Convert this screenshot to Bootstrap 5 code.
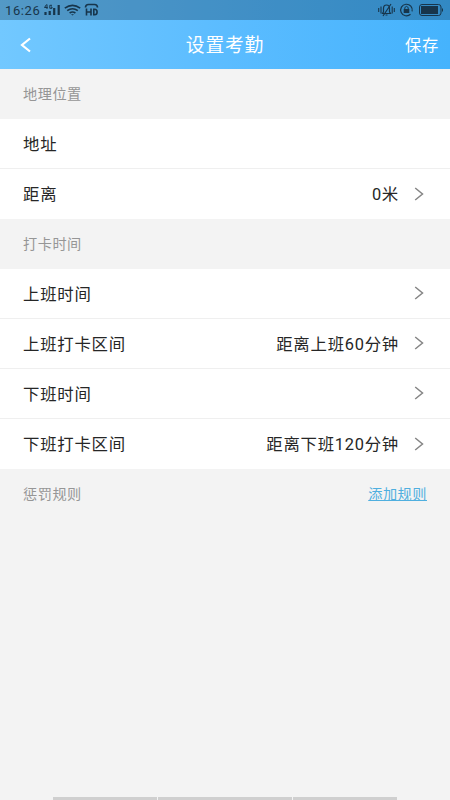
<!DOCTYPE html>
<html lang="zh-CN">
<head>
<meta charset="utf-8">
<meta name="viewport" content="width=device-width, initial-scale=1">
<title>设置考勤</title>
<link href="https://cdn.jsdelivr.net/npm/bootstrap@5.3.0/dist/css/bootstrap.min.css" rel="stylesheet">
<style>
body{background:#f3f3f3;font-family:Roboto,"Noto Sans CJK SC",sans-serif;height:800px;overflow:hidden;color:#222}
.top-area{background:linear-gradient(90deg,#72c8ff,#5bbcff 50%,#45b3fd)}
.status-bar{height:20px;background:rgba(0,25,45,.27);color:#17354b;padding:1px 7px 0 5px}
.status-bar svg{margin-top:-1px}
.clock{font-size:13px;letter-spacing:.6px;line-height:20px}
.title-bar{height:49px;padding:4px 11px 0 20px;color:#fff}
.title-bar h1{font-size:18.8px;letter-spacing:.8px;font-weight:400}
.save-btn{font-size:16.3px;letter-spacing:.7px;color:#fff}
.side-start{width:61px}
.side-end{width:70px}
.back-icon{margin-top:-4px}
.section-head{height:50px;padding:2px 23px 0;font-size:14.2px;letter-spacing:.5px;color:#969696}
.item{height:50px;padding:3px 26px 0 23px!important;font-size:16.4px;letter-spacing:.75px;color:#262626;border-color:#efefef}
.item svg{margin-left:15px;margin-top:-4px}
.add-rule{color:#4fafdf;text-underline-offset:1px}
.nav-strip{height:3px;width:345px;margin-left:53px;gap:1px}
.nav-strip div{background:#cfcfcf}
.w-a{width:104px}.w-b{width:134px}
svg{display:block;flex:none}
</style>
<script src="https://cdn.jsdelivr.net/npm/bootstrap@5.3.0/dist/js/bootstrap.bundle.min.js"></script>
</head>
<body class="d-flex flex-column">
<header class="top-area">
  <div class="status-bar d-flex align-items-center justify-content-between">
    <div class="d-flex align-items-center">
      <span class="clock">16:26</span>
      <svg width="60" height="20" viewBox="40 0 60 20" fill="none" stroke="#17354b">
        <path d="M46.5 4.500 44.500 7.500h3.200M47 4.500V9M52 5.300h-2.200v3H52V7h-1" stroke-width="1"/>
        <path d="M45.500 12v3M49.700 11v4M54.200 8v7M58.700 5v10" stroke-width="2.200"/>
        <path d="M64.800 8.200q7.700-5.700 15.400 0M67.200 10.700q5.300-3.900 10.600 0M69.600 13q2.900-2 5.800 0" stroke-width="1.600"/>
        <path d="M71 14.200h3l-1.500 1.400z" fill="#17354b" stroke="none"/>
        <path d="M85.500 7.500q0-3 3-3h6q3 0 3 3M86.500 8.500v7M91 8.500v7M86.500 12H91M93.800 9.300v5.400h.8q2.500 0 2.500-2.700t-2.500-2.700z" stroke-width="1.600"/>
      </svg>
    </div>
    <svg width="66" height="20" viewBox="377 0 66 20" fill="none" stroke="#17354b">
      <path d="M378.700 8v4M381 6.500v7M392.200 6.500v7M394.300 8v4" stroke-width="1.100"/>
      <path d="M382.500 13.500h8l-1-1.700V8.500q0-3.500-3-3.500t-3 3.500v3.300zM391 4l-8 12M385.500 15h2" stroke-width="1.200"/>
      <path d="M410.500 14.200a5.800 5.800 0 1 1 1.600-2.800" stroke-width="1.200"/>
      <path d="M403.700 9h5.600v4h-5.600z" fill="#17354b" stroke="none"/>
      <path d="M404.800 9V7.500q1.700-2.200 3.400 0V9" stroke-width="1"/>
      <rect x="419.500" y="4.500" width="21.500" height="11" rx="2.500"/>
      <path d="M421 6h17v8h-17z" fill="#17354b" stroke="none"/>
      <path d="M442.500 8.500v3"/>
    </svg>
  </div>
  <nav class="title-bar d-flex align-items-center justify-content-between">
    <div class="side-start"><svg class="back-icon" width="12" height="16" viewBox="0 0 12 16" fill="none" stroke="#fff" stroke-width="2.200"><path d="M10 1.500 2 8l8 6.500"/></svg></div>
    <h1 class="m-0">设置考勤</h1>
    <div class="side-end text-end"><a class="save-btn text-decoration-none" href="#">保存</a></div>
  </nav>
</header>
<main class="flex-grow-1">
  <div class="section-head d-flex align-items-center">地理位置</div>
  <ul class="list-group list-group-flush">
    <li class="item list-group-item d-flex align-items-center">地址</li>
    <li class="item list-group-item d-flex align-items-center"><span class="me-auto">距离</span><span>0米</span><svg width="10" height="14" viewBox="0 0 10 14" fill="none" stroke="#858585" stroke-width="1.500"><path d="m1.200 1 7.300 6-7.300 6"/></svg></li>
  </ul>
  <div class="section-head d-flex align-items-center">打卡时间</div>
  <ul class="list-group list-group-flush">
    <li class="item list-group-item d-flex align-items-center"><span class="me-auto">上班时间</span><svg width="10" height="14" viewBox="0 0 10 14" fill="none" stroke="#858585" stroke-width="1.500"><path d="m1.200 1 7.300 6-7.300 6"/></svg></li>
    <li class="item list-group-item d-flex align-items-center"><span class="me-auto">上班打卡区间</span><span>距离上班60分钟</span><svg width="10" height="14" viewBox="0 0 10 14" fill="none" stroke="#858585" stroke-width="1.500"><path d="m1.200 1 7.300 6-7.300 6"/></svg></li>
    <li class="item list-group-item d-flex align-items-center"><span class="me-auto">下班时间</span><svg width="10" height="14" viewBox="0 0 10 14" fill="none" stroke="#858585" stroke-width="1.500"><path d="m1.200 1 7.300 6-7.300 6"/></svg></li>
    <li class="item list-group-item d-flex align-items-center"><span class="me-auto">下班打卡区间</span><span>距离下班120分钟</span><svg width="10" height="14" viewBox="0 0 10 14" fill="none" stroke="#858585" stroke-width="1.500"><path d="m1.200 1 7.300 6-7.300 6"/></svg></li>
  </ul>
  <div class="section-head d-flex align-items-center justify-content-between"><span>惩罚规则</span><a class="add-rule" href="#">添加规则</a></div>
</main>
<footer class="nav-strip d-flex"><div class="w-a"></div><div class="w-b"></div><div class="w-a"></div></footer>
</body>
</html>
